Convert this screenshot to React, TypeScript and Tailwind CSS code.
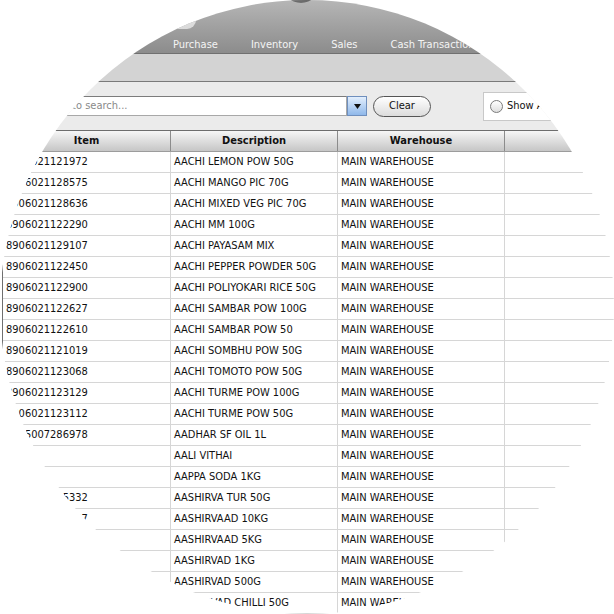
import React from "react";

const rows: [string, string][] = [
  ["8906021121972", "AACHI LEMON POW 50G"],
  ["8906021128575", "AACHI MANGO PIC 70G"],
  ["8906021128636", "AACHI MIXED VEG PIC 70G"],
  ["8906021122290", "AACHI MM 100G"],
  ["8906021129107", "AACHI PAYASAM MIX"],
  ["8906021122450", "AACHI PEPPER POWDER 50G"],
  ["8906021122900", "AACHI POLIYOKARI RICE 50G"],
  ["8906021122627", "AACHI SAMBAR POW 100G"],
  ["8906021122610", "AACHI SAMBAR POW 50"],
  ["8906021121019", "AACHI SOMBHU POW 50G"],
  ["8906021123068", "AACHI TOMOTO POW 50G"],
  ["8906021123129", "AACHI TURME POW 100G"],
  ["8906021123112", "AACHI TURME POW 50G"],
  ["8905007286978", "AADHAR SF OIL 1L"],
  ["", "AALI VITHAI"],
  ["", "AAPPA SODA 1KG"],
  ["8901725025332", "AASHIRVA TUR 50G"],
  ["8901725121127", "AASHIRVAAD 10KG"],
  ["8901725121110", "AASHIRVAAD 5KG"],
  ["8901725181015", "AASHIRVAD 1KG"],
  ["8901725181022", "AASHIRVAD 500G"],
  ["8901725112040", "AASHIRVAD CHILLI 50G"],
];

const nav = ["Purchase", "Inventory", "Sales", "Cash Transaction", "Reports"];

function GridRow({ code, desc }: { code: string; desc: string }) {
  return (
    <div className="flex h-[21px] border-b border-[#d6d6d6]">
      <div className="w-[168px] shrink-0 pl-[3px] pt-px border-r border-[#d6d6d6] flex items-center">{code}</div>
      <div className="w-[167px] shrink-0 pl-[3px] pt-px border-r border-[#d6d6d6] flex items-center">{desc}</div>
      <div className="w-[167px] shrink-0 pl-[3px] pt-px border-r border-[#d6d6d6] flex items-center">MAIN WAREHOUSE</div>
      <div className="flex-1" />
    </div>
  );
}

export default function App() {
  return (
    <div className="w-[614px] h-[614px] bg-white">
      <div className="relative w-[614px] h-[614px] rounded-full overflow-hidden bg-white text-[11px] text-[#111] font-['DejaVu_Sans_Condensed','DejaVu_Sans',sans-serif] font-stretch-condensed">
        {/* top menu */}
        <div className="relative h-[54px] border-b border-[#707070] bg-linear-to-b from-[#b6b6b6] to-[#8c8c8c] flex items-end gap-[33px] pl-[173px] pb-px text-[#f4f4f4] leading-[14px] whitespace-nowrap">
          <div className="absolute left-[118px] top-[-12px] w-[78px] h-[41px] rounded-br-[9px] bg-linear-to-b from-[#f4f4f4] to-[#d9d9d9]" />
          <div className="absolute left-[282px] top-[-22px] w-[38px] h-[25px] rounded-b-full bg-linear-to-b from-[#333] to-[#707070]" />
          {nav.map((n) => (
            <span key={n}>{n}</span>
          ))}
        </div>
        <div className="h-[28px] bg-[#d3d3d3] border-b border-[#7a7a7a]" />

        {/* search bar */}
        <div className="h-[48px] bg-[#ebebeb] flex items-center pl-[10px] whitespace-nowrap">
          <div className="w-[337px] h-[20px] shrink-0 bg-white border border-[#a8a8a8] border-t-[#7c7c7c] flex items-center pl-[10px] text-[#8a8a8a]">
            Type here to search...
          </div>
          <div className="w-[20px] h-[20px] shrink-0 border border-[#6f8fbd] bg-linear-to-b from-[#e3effd] to-[#8fb8ea] flex items-center justify-center">
            <svg width="7" height="5" viewBox="0 0 7 5">
              <path d="M0 0h7L3.5 5z" fill="#111" />
            </svg>
          </div>
          <button className="ml-[6px] w-[58px] h-[21px] shrink-0 rounded-full border border-[#555] bg-linear-to-b from-white to-[#dcdcdc] text-[11px] text-[#111]">
            Clear
          </button>
          <div className="ml-[52px] w-[150px] h-[29px] shrink-0 bg-white border border-[#c8c8c8] flex items-center pl-[6px] gap-[4px]">
            <span className="w-[13px] h-[13px] rounded-full border border-[#7b7b7b] bg-linear-to-b from-white to-[#dedede]" />
            <span>Show All</span>
          </div>
        </div>

        {/* grid */}
        <div className="ml-[2px] border-l border-[#6f6f6f]">
          <div className="flex h-[22px] border-t border-b border-t-[#6d6d6d] border-b-[#9c9c9c] bg-linear-to-b from-[#f6f6f6] to-[#c6c6c6] font-bold">
            <div className="w-[168px] shrink-0 border-r border-[#8c8c8c] flex items-center justify-center">Item</div>
            <div className="w-[167px] shrink-0 border-r border-[#8c8c8c] flex items-center justify-center">Description</div>
            <div className="w-[167px] shrink-0 border-r border-[#8c8c8c] flex items-center justify-center">Warehouse</div>
            <div className="flex-1" />
          </div>
          {rows.map(([c, d], i) => (
            <GridRow key={i} code={c} desc={d} />
          ))}
        </div>
      </div>
    </div>
  );
}
